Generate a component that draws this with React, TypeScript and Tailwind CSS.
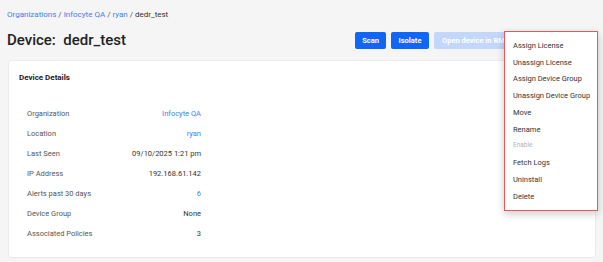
const details = [
  { label: "Organization", value: "Infocyte QA", link: true },
  { label: "Location", value: "ryan", link: true },
  { label: "Last Seen", value: "09/10/2025 1:21 pm" },
  { label: "IP Address", value: "192.168.61.142" },
  { label: "Alerts past 30 days", value: "6", link: true },
  { label: "Device Group", value: "None" },
  { label: "Associated Policies", value: "3" },
];

const menu = [
  "Assign License",
  "Unassign License",
  "Assign Device Group",
  "Unassign Device Group",
  "Move",
  "Rename",
  "Enable",
  "Fetch Logs",
  "Uninstall",
  "Delete",
];

export default function App() {
  return (
    <div
      className="relative w-[603px] h-[262px] overflow-hidden bg-[#f5f5f5] px-[7px]"
      style={{ fontFamily: "Roboto, 'Liberation Sans', sans-serif" }}
    >
      {/* Breadcrumb */}
      <div className="pt-[10px] text-[8px] leading-[10px] text-[#333]">
        <span className="text-[#3f80ec]">Organizations</span>
        <span className="mx-[2px] text-[#555]">/</span>
        <span className="text-[#3f80ec]">Infocyte QA</span>
        <span className="mx-[2px] text-[#555]">/</span>
        <span className="text-[#3f80ec]">ryan</span>
        <span className="mx-[2px] text-[#555]">/</span>
        <span>dedr_test</span>
      </div>

      {/* Header */}
      <div className="mt-[12px] flex items-center">
        <h1 className="text-[15px] leading-[17px] font-medium text-[#222]">
          Device:&nbsp; dedr_test
        </h1>
        <div className="ml-auto mr-[47px] flex gap-[5px]">
          <button className="h-[17px] w-[31px] rounded-[2px] bg-[#1166f5] text-[7.5px] font-bold text-white">
            Scan
          </button>
          <button className="h-[17px] w-[38px] rounded-[2px] bg-[#1166f5] text-[7.5px] font-bold text-white">
            Isolate
          </button>
          <button className="h-[17px] w-[115px] rounded-[2px] bg-[#c3d7fb] pl-[8px] text-left text-[7.5px] font-bold text-white">
            Open device in RMM
          </button>
        </div>
      </div>

      {/* Card */}
      <div className="mt-[11px] ml-[1px] w-[588px] h-[198px] rounded-[3px] border border-[#ebebeb] bg-white">
        <div className="pl-[10px] pt-[12px] text-[8px] leading-[10px] font-bold text-[#222]">
          Device Details
        </div>
        <div className="mt-[21px] ml-[18px] w-[174px]">
          {details.map((d) => (
            <div key={d.label} className="flex h-[20px] items-center justify-between text-[7.5px]">
              <span className="text-[#555]">{d.label}</span>
              <span className={d.link ? "text-[#3f80ec]" : "text-[#333]"}>{d.value}</span>
            </div>
          ))}
        </div>
      </div>

      {/* Dropdown */}
      <div className="absolute left-[504px] top-[31px] w-[94px] border-[1.5px] border-[#e8555b] bg-white py-[5px] shadow-[0_3px_8px_rgba(0,0,0,0.2)]">
        {menu.map((m) => (
          <div
            key={m}
            className={
              m === "Enable"
                ? "flex h-[16.8px] items-center pl-[8px] text-[6.5px] text-[#b5b5b5]"
                : "flex h-[16.8px] items-center pl-[8px] text-[7.5px] text-[#333]"
            }
          >
            {m}
          </div>
        ))}
      </div>
    </div>
  );
}
